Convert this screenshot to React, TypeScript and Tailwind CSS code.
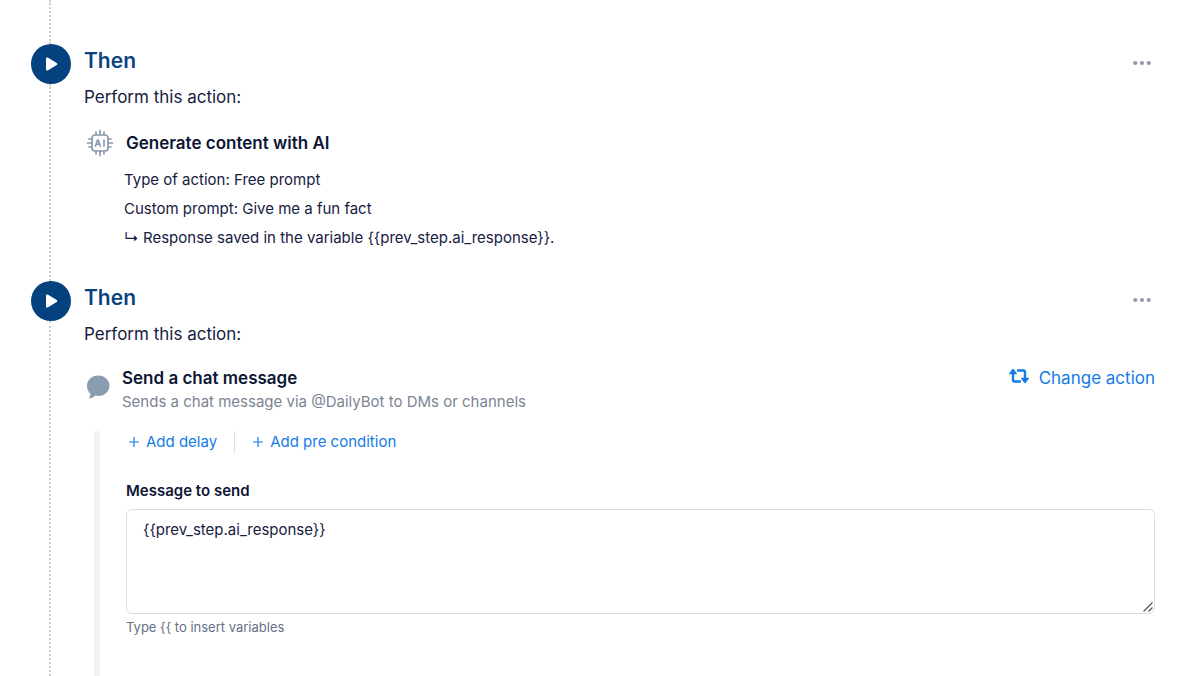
import React, { useState } from 'react';

const PlayBadge = () => (
  <div className="flex size-10 shrink-0 items-center justify-center rounded-full bg-[#03417f]">
    <svg width="14" height="16" viewBox="0 0 14 16" fill="white" aria-hidden="true">
      <path d="M2 2.6c0-.9.9-1.4 1.7-1l9 5.3c.8.5.8 1.6 0 2.1l-9 5.4c-.8.4-1.7-.1-1.7-1z" />
    </svg>
  </div>
);

const ChipIcon = () => (
  <svg
    width="28"
    height="28"
    viewBox="0 0 28 28"
    fill="none"
    stroke="#8c9bad"
    strokeWidth="1.7"
    strokeLinecap="round"
    strokeLinejoin="round"
    aria-hidden="true"
  >
    <rect x="6" y="6" width="16" height="16" rx="3" />
    <path d="M10 6V3M14 6V1.500M18 6V3M10 22v3M14 22v4.500M18 22v3" />
    <path d="M6 10H3M6 14H1.500M6 18H3M22 10h3M22 14h4.500M22 18h3" />
    <path d="M9.500 17l2-6h.8l2 6M10.200 15.200h3.400M18 11v6" />
  </svg>
);

const ChatIcon = () => (
  <svg width="24" height="24" viewBox="0 0 24 24" fill="#8a9caf" aria-hidden="true">
    <path d="M12.300.5c6.400 0 11.200 4.400 11.200 10.200s-4.800 10.200-11.200 10.200c-1 0-2-.1-2.900-.3-1.300 1.300-3.200 2.400-5.600 2.800-.5.1-.8-.4-.5-.8.8-1 1.200-2.300 1.200-3.800C2.300 16.900 1 14.100 1 10.700 1 4.900 5.900.5 12.300.5z" />
  </svg>
);

const ChangeIcon = () => (
  <svg
    width="20"
    height="16"
    viewBox="0 0 20 16"
    fill="none"
    stroke="currentColor"
    strokeWidth="2.4"
    strokeLinejoin="round"
    aria-hidden="true"
  >
    <path d="M4 5v7a1.500 1.500 0 0 0 1.500 1.500H12M8 2.500h6.500A1.500 1.500 0 0 1 16 4v7" />
    <path d="M4 1.500L.8 5.600h6.400zM16 14.500l-3.200-4.100h6.400z" fill="currentColor" strokeWidth="1.500" />
  </svg>
);

const PlusIcon = () => (
  <svg width="12" height="12" viewBox="0 0 12 12" stroke="currentColor" strokeWidth="1.200" aria-hidden="true">
    <path d="M6 1v10M1 6h10" />
  </svg>
);

type StepProps = {
  className?: string;
  children: React.ReactNode;
};

const Step = ({ className = '', children }: StepProps) => (
  <li className={`flex gap-3 ${className}`}>
    <div className="flex flex-col">
      <PlayBadge />
      <div className="ml-[18px] flex-1 border-l-2 border-dotted border-[#cdcdd0]" />
    </div>
    <div className="flex min-w-0 flex-1 flex-col pl-px">
      <div className="flex items-center justify-between">
        <h2 className="text-[21px] leading-[34px] font-semibold text-[#0b4280]">Then</h2>
        <button type="button" aria-label="Step options" className="mt-1 mr-1 flex h-6 items-center">
          <svg width="18" height="6" viewBox="0 0 18 6" fill="#919aa6" aria-hidden="true">
            <circle cx="2.300" cy="3" r="2.100" />
            <circle cx="9" cy="3" r="2.100" />
            <circle cx="15.700" cy="3" r="2.100" />
          </svg>
        </button>
      </div>
      <p className="mt-[7px] text-[17px] leading-6">Perform this action:</p>
      {children}
    </div>
  </li>
);

const App = () => {
  const [message, setMessage] = useState('{{prev_step.ai_response}}');

  return (
    <main className="flex min-h-screen flex-col bg-white pr-[45px] pl-[31px] font-['Inter',sans-serif] text-[#16203f]">
      <div className="ml-[18px] h-11 border-l-2 border-dotted border-[#cdcdd0]" />
      <ol className="flex flex-1 flex-col">
        <Step>
          <div className="mt-5 flex items-center gap-3 pl-[2px]">
            <ChipIcon />
            <h3 className="text-[17px] leading-6 font-semibold text-[#0d1635]">Generate content with AI</h3>
          </div>
          <div className="mt-2 pb-[29px] pl-10 text-[15px] leading-[29px]">
            <p>Type of action: Free prompt</p>
            <p>Custom prompt: Give me a fun fact</p>
            <p>↳ Response saved in the variable {'{{prev_step.ai_response}}'}.</p>
          </div>
        </Step>

        <Step className="flex-1">
          <div className="mt-5 flex items-start gap-3 pl-[2px]">
            <div className="mt-[9px]">
              <ChatIcon />
            </div>
            <div className="flex-1">
              <h3 className="text-[17px] leading-6 font-semibold text-[#0d1635]">Send a chat message</h3>
              <p className="text-[15px] leading-6 text-[#7c8494]">
                Sends a chat message via @DailyBot to DMs or channels
              </p>
            </div>
            <button type="button" className="flex items-start gap-2.5 text-[17px] leading-6 text-[#147ce5]">
              <span className="pt-0.5">
                <ChangeIcon />
              </span>
              Change action
            </button>
          </div>

          <div className="mt-[17px] ml-[10px] flex-1 border-l-[6px] border-[#f1f3f5] pb-8 pl-[26px]">
            <div className="flex items-center text-[15px] leading-[22px] text-[#147ce5]">
              <button type="button" className="flex items-center gap-1.5 pl-0.5">
                <PlusIcon />
                Add delay
              </button>
              <div className="mx-[17px] h-[22px] w-px bg-[#dcdfe4]" />
              <button type="button" className="flex items-center gap-1.5">
                <PlusIcon />
                Add pre condition
              </button>
            </div>

            <label htmlFor="message" className="mt-[26px] block text-[15px] leading-6 font-semibold text-[#0d1635]">
              Message to send
            </label>
            <div className="relative mt-1.5">
              <textarea
                id="message"
                value={message}
                onChange={(e) => setMessage(e.target.value)}
                className="block h-[105px] w-full resize-none rounded-md border border-[#d9dce0] px-4 py-2 text-[15px] leading-6 outline-none"
              />
              <svg
                width="12"
                height="12"
                viewBox="0 0 12 12"
                stroke="#50545c"
                strokeWidth="1.200"
                className="pointer-events-none absolute right-px bottom-px"
                aria-hidden="true"
              >
                <path d="M1.500 10.500l9-9M6.500 10.500l4-4" />
              </svg>
            </div>
            <p className="mt-[3px] text-[13px] leading-5 text-[#667085]">Type {'{{'} to insert variables</p>
          </div>
        </Step>
      </ol>
    </main>
  );
};

export default App;
